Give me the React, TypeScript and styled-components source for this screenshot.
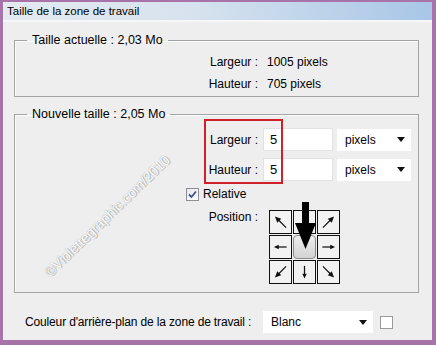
import styled, { createGlobalStyle } from 'styled-components';

const GlobalStyle = createGlobalStyle`
    html, body {
        margin: 0;
        padding: 0;
        background: #a873a8;
    }
    body {
        font-family: "Liberation Sans", Arial, sans-serif;
        font-size: 12px;
        color: #000;
    }
`;

type Dir = 'nw' | 'n' | 'ne' | 'w' | 'c' | 'e' | 'sw' | 's' | 'se';

const angles: Record<string, number> = {
    nw: -135, ne: -45, w: 180, e: 0, sw: 135, s: 90, se: 45,
};

const cells: Dir[] = ['nw', 'n', 'ne', 'w', 'c', 'e', 'sw', 's', 'se'];

const SmallArrow = ({ dir }: { dir: Dir }) => {
    const diag = dir.length === 2;
    const start = diag ? 3 : 5;
    return (
        <svg width="22" height="22" viewBox="0 0 24 24">
            <g transform={`rotate(${angles[dir]} 12 12)`}>
                <line x1={start} y1="12" x2="16" y2="12" stroke="#111" strokeWidth="1.4" />
                <polygon points={diag ? '14,8.8 21,12 14,15.2' : '14,9.5 19.5,12 14,14.5'} fill="#111" />
            </g>
        </svg>
    );
};

const DropArrow = () => (
    <svg width="8" height="5" viewBox="0 0 8 5">
        <polygon points="0,0 8,0 4,5" fill="#111" />
    </svg>
);

export default function App() {
    return (
        <>
            <GlobalStyle />
            <Frame>
                <Window>
                    <TitleBar>Taille de la zone de travail</TitleBar>
                    <Body>
                        <Group>
                            <Legend>Taille actuelle : 2,03 Mo</Legend>
                            <InfoGrid>
                                <InfoLabel>Largeur :</InfoLabel>
                                <span>1005 pixels</span>
                                <InfoLabel>Hauteur :</InfoLabel>
                                <span>705 pixels</span>
                            </InfoGrid>
                        </Group>

                        <Group $gap={10}>
                            <Legend>Nouvelle taille : 2,05 Mo</Legend>
                            <Watermark>©Violettegraphic.com/2010</Watermark>
                            <Controls>
                                <Highlight />
                                <FieldLabel>Largeur :</FieldLabel>
                                <TextInput>5</TextInput>
                                <Select $width={74}>pixels<DropArrow /></Select>

                                <FieldLabel>Hauteur :</FieldLabel>
                                <TextInput>5</TextInput>
                                <Select $width={74}>pixels<DropArrow /></Select>

                                <CheckRow>
                                    <CheckBox>
                                        <svg width="11" height="11" viewBox="0 0 11 11">
                                            <path d="M2 5.5 L4.5 8 L9 2.5" fill="none" stroke="#3c4f8c" strokeWidth="1.8" />
                                        </svg>
                                    </CheckBox>
                                    Relative
                                </CheckRow>

                                <PositionLabel>Position :</PositionLabel>
                                <AnchorGrid>
                                    {cells.map((d) => (
                                        <AnchorCell key={d} $center={d === 'c'}>
                                            {d !== 'c' && d !== 'n' && <SmallArrow dir={d} />}
                                        </AnchorCell>
                                    ))}
                                    <BigArrow width="24" height="48" viewBox="0 0 24 48">
                                        <rect x="8" y="0" width="7" height="23" fill="#000" />
                                        <polygon points="1,21 22,21 11.5,47" fill="#000" />
                                    </BigArrow>
                                </AnchorGrid>
                            </Controls>
                        </Group>

                        <BottomRow>
                            <BottomLabel>Couleur d'arrière-plan de la zone de travail :</BottomLabel>
                            <Select $width={110}>Blanc<DropArrow /></Select>
                            <Swatch />
                        </BottomRow>
                    </Body>
                </Window>
            </Frame>
        </>
    );
}

const Frame = styled.div`
    width: 436px;
    height: 345px;
    box-sizing: border-box;
    padding: 2px 4px 5px 3px;
    background: #a873a8;
`;

const Window = styled.div`
    height: 100%;
    background: #eeeeee;
    display: flex;
    flex-direction: column;
`;

const TitleBar = styled.div`
    height: 18px;
    line-height: 18px;
    padding-left: 4px;
    font-size: 11.5px;
    background: linear-gradient(90deg, #e4eaf0 0%, #d6e2ee 45%, #a8c6e7 100%);
    border-bottom: 2px solid #f6f7f9;
`;

const Body = styled.div`
    padding: 11px 13px 0 11px;
    display: flex;
    flex-direction: column;
`;

const Group = styled.fieldset<{ $gap?: number }>`
    position: relative;
    margin: ${(p) => p.$gap ?? 0}px 0 0 0;
    padding: 0;
    min-width: 0;
    border: 1px solid #a4a4a4;
    box-shadow: inset 1px 1px 0 #fbfbfb;
`;

const Legend = styled.legend`
    margin-left: 12px;
    padding: 0 5px;
    font-size: 12.5px;
    line-height: 15px;
`;

const InfoGrid = styled.div`
    display: grid;
    grid-template-columns: 243px auto;
    column-gap: 9px;
    line-height: 22px;
    padding: 3px 0 1px;
`;

const InfoLabel = styled.span`
    text-align: right;
`;

const Controls = styled.div`
    position: relative;
    display: grid;
    grid-template-columns: 77px 74px 74px;
    row-gap: 7px;
    margin: 6px 0 8px 171px;
    align-items: center;
`;

const Highlight = styled.div`
    position: absolute;
    left: 18px;
    top: -9px;
    width: 75px;
    height: 61px;
    border: 2px solid #d2202a;
    pointer-events: none;
    z-index: 2;
`;

const FieldLabel = styled.span`
    grid-column: 1;
    text-align: right;
    padding-right: 5px;
    font-size: 12px;
`;

const TextInput = styled.div`
    width: 70px;
    height: 23px;
    box-sizing: border-box;
    padding-left: 6px;
    line-height: 22px;
    font-size: 13px;
    background: #fff;
    border: 1px solid #e2e2e2;
`;

const Select = styled.div<{ $width: number }>`
    width: ${(p) => p.$width}px;
    height: 22px;
    flex-shrink: 0;
    box-sizing: border-box;
    padding: 0 6px 0 8px;
    display: flex;
    align-items: center;
    justify-content: space-between;
    background: #fff;
    font-size: 12px;
`;

const CheckRow = styled.label`
    grid-column: 1 / -1;
    display: flex;
    align-items: center;
    gap: 4px;
    height: 18px;
    margin-top: -3px;
    font-size: 12px;
`;

const CheckBox = styled.span`
    width: 13px;
    height: 13px;
    box-sizing: border-box;
    border: 1px solid #8c8f96;
    background: linear-gradient(135deg, #e8e8ea, #ffffff);
    display: inline-flex;
    align-items: center;
    justify-content: center;
`;

const PositionLabel = styled(FieldLabel)`
    align-self: start;
    margin-top: 0;
`;

const AnchorGrid = styled.div`
    position: relative;
    grid-column: 2 / 4;
    margin-left: 6px;
    display: grid;
    grid-template-columns: repeat(3, 23px);
    grid-auto-rows: 24px;
    gap: 1px;
    width: max-content;
`;

const AnchorCell = styled.div<{ $center?: boolean }>`
    box-sizing: border-box;
    display: flex;
    align-items: center;
    justify-content: center;
    border: 1px solid ${(p) => (p.$center ? '#8a8a8a' : '#111')};
    border-radius: ${(p) => (p.$center ? '4px' : '0')};
    background: ${(p) => (p.$center ? 'linear-gradient(#ececec, #d3d3d3)' : '#f2f2f2')};
`;

const BigArrow = styled.svg`
    position: absolute;
    left: 25px;
    top: -8px;
`;

const Watermark = styled.span`
    position: absolute;
    left: 92px;
    top: 94px;
    transform: translate(-50%, -50%) rotate(-44deg);
    white-space: nowrap;
    font-size: 14px;
    color: #ffffff;
    text-shadow: 0 0 1px #8f8f8f, 1px 1px 0 #c4c4c4;
    pointer-events: none;
`;

const BottomRow = styled.div`
    display: flex;
    align-items: center;
    margin-top: 18px;
    padding-left: 11px;
`;

const BottomLabel = styled.span`
    width: 238px;
    flex-shrink: 0;
    white-space: nowrap;
    font-size: 12px;
    letter-spacing: -0.15px;
`;

const Swatch = styled.div`
    width: 13px;
    height: 13px;
    margin-left: 7px;
    box-sizing: border-box;
    border: 1px solid #9a9a9a;
    background: #fff;
`;
